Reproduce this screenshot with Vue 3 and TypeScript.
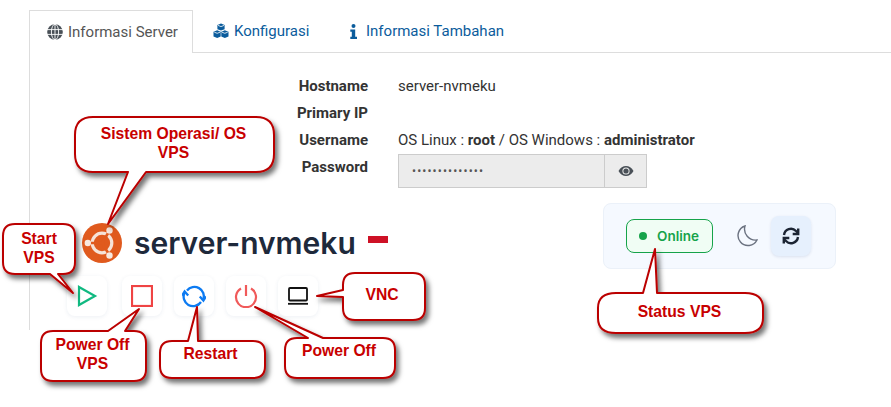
<script setup lang="ts">
interface Callout { d: string }
const callouts: Callout[] = [
  { d: 'M93 117H256Q274 117 274 135V154Q274 172 256 172H146L108 224L128 172H93Q75 172 75 154V135Q75 117 93 117Z' },
  { d: 'M15 224H63Q75 224 75 236V262Q75 274 63 274H58L73 293L50 274H15Q3 274 3 262V236Q3 224 15 224Z' },
  { d: 'M53 331H108L139 309L125 331H134Q146 331 146 343V369Q146 381 134 381H53Q41 381 41 369V343Q41 331 53 331Z' },
  { d: 'M172 341H188L197 307L198 341H253Q265 341 265 353V366Q265 378 253 378H172Q160 378 160 366V353Q160 341 172 341Z' },
  { d: 'M297 338H308L255 307L323 338H383Q395 338 395 350V366Q395 378 383 378H297Q285 378 285 366V350Q285 338 297 338Z' },
  { d: 'M355 273H413Q425 273 425 285V308Q425 320 413 320H355Q343 320 343 308V297L317 296L343 290V285Q343 273 355 273Z' },
  { d: 'M616 293H643L655 249L657 293H745Q763 293 763 308V318Q763 333 745 333H616Q598 333 598 318V308Q598 293 616 293Z' },
]
const labels = [
  { t: 'Sistem Operasi/ OS<br>VPS', x: 74, y: 124, w: 199 },
  { t: 'Start<br>VPS', x: 3, y: 229, w: 72 },
  { t: 'Power Off<br>VPS', x: 40, y: 335, w: 105 },
  { t: 'Restart', x: 158, y: 344, w: 105 },
  { t: 'Power Off', x: 284, y: 341, w: 110 },
  { t: 'VNC', x: 341, y: 285, w: 82 },
  { t: 'Status VPS', x: 597, y: 302, w: 165 },
]
function pos(l: { x: number; y: number; w: number }) {
  return { left: l.x + 'px', top: l.y + 'px', width: l.w + 'px' }
}
</script>

<template>
  <div class="page">
    <nav class="tabs">
      <div class="tab active">
        <svg class="ti" viewBox="0 0 16 16" fill="#495057"><circle cx="8" cy="8" r="7.800"/><path d="M0 5.600h16M0 10.400h16M8 0v16" stroke="#fff" stroke-width=".9"/><ellipse cx="8" cy="8" rx="3.600" ry="7.800" fill="none" stroke="#fff" stroke-width=".9"/></svg>
        <span>Informasi Server</span>
      </div>
      <div class="tab">
        <svg class="ti" viewBox="0 0 16 16" fill="#0b5c9c"><path d="M8 .5l3.600 1.400v4.300L8 7.600 4.400 6.200V1.900z"/><path d="M4.200 7.300l3.500 1.400v4.700L4.200 15 .5 13.400V8.700z"/><path d="M11.800 7.300l3.700 1.400v4.700L11.800 15l-3.500-1.600V8.700z"/><path d="M5 2.400l3 1.200 3-1.200M1.300 9.200l2.900 1.100 2.800-1.100M9 9.200l2.800 1.100 2.900-1.100" stroke="#fff" stroke-width=".8" fill="none"/></svg>
        <span>Konfigurasi</span>
      </div>
      <div class="tab">
        <svg class="ti info" viewBox="0 0 7 15" fill="#0b5c9c"><circle cx="3.500" cy="2" r="2"/><path d="M.3 5.500h4.900v7.300H7V15H.3v-2.200h1.500V7.700H.3z"/></svg>
        <span>Informasi Tambahan</span>
      </div>
    </nav>

    <section class="panel">
      <div class="form">
        <div class="lbl">Hostname</div><div class="val">server-nvmeku</div>
        <div class="lbl">Primary IP</div><div class="val"></div>
        <div class="lbl">Username</div><div class="val">OS Linux : <b>root</b> / OS Windows : <b>administrator</b></div>
        <div class="lbl">Password</div>
        <div class="pw">
          <div class="pw-input">••••••••••••••</div>
          <div class="pw-add">
            <svg width="16" height="12" viewBox="0 0 16 12"><path d="M.5 6C2.400 2.600 5 1 8 1s5.600 1.600 7.500 5C13.600 9.400 11 11 8 11S2.400 9.400.5 6z" fill="#495057"/><circle cx="8" cy="6" r="3.600" fill="#ececec"/><circle cx="8" cy="6" r="2.600" fill="#495057"/></svg>
          </div>
        </div>
      </div>

      <div class="bottom">
        <div class="identity">
          <div class="name-row">
            <svg class="ubuntu" viewBox="0 0 40 40">
              <circle cx="20" cy="20" r="20" fill="#e05a1e"/>
              <circle cx="20" cy="20" r="9.800" fill="none" stroke="#f6e3d8" stroke-width="3.200"/>
              <path d="M20 20L5 20M20 20L28 7M20 20L28 33" stroke="#e05a1e" stroke-width="2.600"/>
              <circle cx="5.800" cy="20" r="3.200" fill="#f8e8df"/>
              <circle cx="27.500" cy="7.500" r="3.200" fill="#f8e8df"/>
              <circle cx="27.500" cy="32.500" r="3.200" fill="#f8e8df"/>
            </svg>
            <h1 class="name">server-nvmeku</h1>
            <span class="flag"></span>
          </div>
          <div class="actions">
            <button class="act first"><svg width="22" height="24" viewBox="0 0 22 24"><path d="M3 3L19 12L3 21Z" fill="none" stroke="#10b981" stroke-width="2.200"/></svg></button>
            <button class="act"><svg width="22" height="22" viewBox="0 0 22 22"><rect x="1" y="1" width="20" height="20" fill="none" stroke="#ef4444" stroke-width="2.200"/></svg></button>
            <button class="act"><svg width="24" height="24" viewBox="0 0 24 24" fill="none" stroke="#0d7bf2" stroke-width="2.300"><path d="M5 6.500A9.500 9.500 0 0 1 21.400 15.500"/><path d="M19 18A9.500 9.500 0 0 1 2.600 8.500"/><path d="M17.800 12.500L21.400 16.500L24 12.500"/><path d="M0 11.500L2.600 7.500L6.200 11.500"/></svg></button>
            <button class="act"><svg width="24" height="24" viewBox="0 0 24 24" fill="none" stroke="#f05a5a" stroke-width="2.200"><path d="M7 4.500A10 10 0 1 0 17 4.500"/><path d="M12 1v11"/></svg></button>
            <button class="act"><svg width="22" height="20" viewBox="0 0 22 20" fill="none" stroke="#111" stroke-width="1.800"><rect x="2" y="2" width="18" height="12.500" rx="1"/><path d="M1 17.800h20"/></svg></button>
          </div>
        </div>
        <div class="status">
          <div class="badge"><span class="dot"></span>Online</div>
          <svg class="moon" width="22" height="22" viewBox="0 0 22 22"><path d="M9 1A10 10 0 1 0 21 15A11 11 0 0 1 9 1Z" fill="none" stroke="#6b7280" stroke-width="1.400"/></svg>
          <div class="sync">
            <svg width="18" height="18" viewBox="0 0 18 18" fill="none" stroke="#1b2433" stroke-width="2.400"><path d="M2 8A7 7 0 0 1 14 4L16 6"/><path d="M16 10A7 7 0 0 1 4 14L2 12"/><path d="M16.200 1.500V7h-5.500M1.800 16.500V11h5.500"/></svg>
          </div>
        </div>
      </div>
    </section>

    <svg class="overlay" width="891" height="407" viewBox="0 0 891 407">
      <defs>
        <filter id="cs" x="-20%" y="-20%" width="150%" height="150%">
          <feDropShadow dx="3" dy="4" stdDeviation="2.500" flood-color="#000" flood-opacity=".55"/>
        </filter>
      </defs>
      <path v-for="(c, i) in callouts" :key="i" :d="c.d" fill="#fff" stroke="#bb0000" stroke-width="2" stroke-linejoin="round" filter="url(#cs)"/>
    </svg>
    <div v-for="l in labels" :key="l.t" class="note" :style="pos(l)" v-html="l.t"></div>
  </div>
</template>

<style>
html, body { margin: 0; background: #fff; }
</style>

<style scoped>
.page { position: relative; width: 891px; height: 407px; overflow: hidden; padding-top: 10px; box-sizing: border-box; font-family: Roboto, "Liberation Sans", sans-serif; font-size: 15px; color: #333; }
.tabs { display: flex; margin-left: 29px; border-bottom: 1px solid #ddd; height: 42px; box-sizing: content-box; }
.tab { display: flex; align-items: center; gap: 6px; color: #0b5c9c; height: 42px; box-sizing: border-box; }
.tab.active { width: 164px; padding: 0 0 0 17px; gap: 5px; border: 1px solid #ddd; border-bottom: 0; background: #fff; color: #555; height: 43px; }
.tab:nth-child(2) { padding: 0 0 0 20px; width: 137px; box-sizing: border-box; gap: 5px; }
.tab:nth-child(3) { padding: 0 0 0 20px; gap: 9px; }
.ti { width: 16px; height: 16px; flex: none; }
.ti.info { width: 7px; height: 15px; }
.panel { margin-left: 29px; height: 277px; border-left: 1px solid #ddd; }
.form { display: grid; grid-template-columns: 338px 1fr; column-gap: 30px; grid-auto-rows: 27px; padding-top: 19px; align-items: center; }
.lbl { font-weight: 700; text-align: right; }
.val { color: #333; }
.pw { display: flex; width: 249px; height: 34px; margin-top: 1px; align-self: start; border: 1px solid #ccc; box-sizing: border-box; background: #ececec; }
.pw-input { flex: 1; padding-left: 13px; line-height: 32px; font-size: 12px; letter-spacing: 1.100px; color: #555; }
.pw-add { width: 41px; border-left: 1px solid #ccc; display: flex; align-items: center; justify-content: center; }
.bottom { display: flex; justify-content: space-between; align-items: flex-start; margin-top: 23px; width: 806px; }
.identity { padding-left: 37px; margin-top: 20px; }
.name-row { display: flex; align-items: center; height: 40px; margin-left: 15px; }
.ubuntu { width: 40px; height: 40px; }
.name { margin: 0 0 0 12px; font-family: Inter, sans-serif; font-size: 30px; font-weight: 600; color: #1e293b; line-height: 40px; }
.flag { width: 20px; height: 14px; margin: 0 0 0 12px; background: linear-gradient(#ce1126 50%, #fff 50%); }
.actions { display: flex; gap: 12px; margin-top: 13px; }
.act { width: 40px; height: 40px; padding: 0; border: 0; border-radius: 8px; background: #fff; box-shadow: 0 1px 4px rgba(30, 60, 120, .08); display: flex; align-items: center; justify-content: center; }
.act.first { margin-right: 3px; }
.status { width: 233px; height: 66px; box-sizing: border-box; display: flex; align-items: center; padding-left: 22px; background: #f5f9ff; border: 1px solid #ebf1f9; border-radius: 8px; }
.badge { display: flex; align-items: center; gap: 10px; width: 87px; height: 34px; box-sizing: border-box; padding-left: 12px; background: #f0fdf4; border: 1px solid #16a34a; border-radius: 8px; color: #16a34a; font-family: Inter, sans-serif; font-size: 13.500px; font-weight: 600; }
.dot { width: 8px; height: 8px; border-radius: 50%; background: #16a34a; }
.moon { margin-left: 23px; }
.sync { width: 40px; height: 40px; margin-left: 13px; border-radius: 8px; background: #e6f0fd; box-shadow: 0 1px 3px rgba(30, 60, 120, .12); display: flex; align-items: center; justify-content: center; }
.overlay { position: absolute; left: 0; top: 0; pointer-events: none; }
.note { position: absolute; text-align: center; font-family: "Liberation Sans", Arial, sans-serif; font-weight: 700; font-size: 15.700px; line-height: 19px; color: #c80000; }
</style>
